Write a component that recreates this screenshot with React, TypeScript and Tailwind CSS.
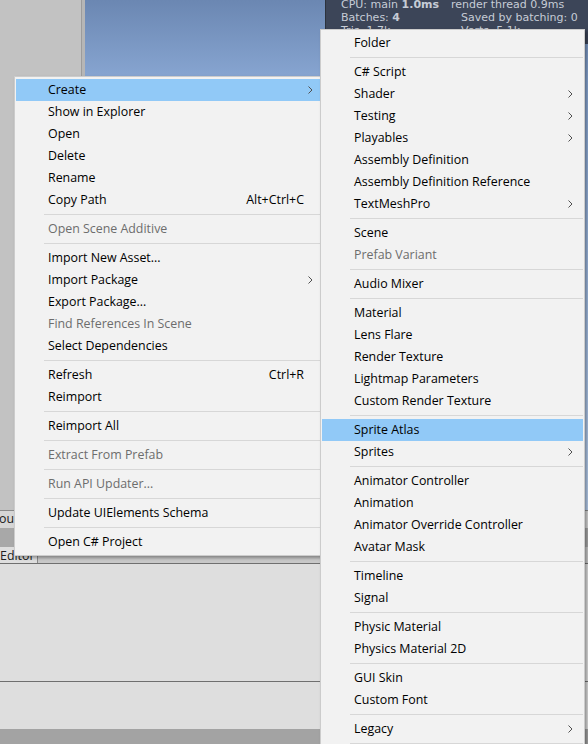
import React from "react";

type Entry =
  | { sep: true }
  | { label: string; disabled?: boolean; shortcut?: string; sub?: boolean; active?: boolean };

const S: Entry = { sep: true };

const projectMenu: Entry[] = [
  { label: "Create", sub: true, active: true },
  { label: "Show in Explorer" },
  { label: "Open" },
  { label: "Delete" },
  { label: "Rename" },
  { label: "Copy Path", shortcut: "Alt+Ctrl+C" },
  S,
  { label: "Open Scene Additive", disabled: true },
  S,
  { label: "Import New Asset..." },
  { label: "Import Package", sub: true },
  { label: "Export Package..." },
  { label: "Find References In Scene", disabled: true },
  { label: "Select Dependencies" },
  S,
  { label: "Refresh", shortcut: "Ctrl+R" },
  { label: "Reimport" },
  S,
  { label: "Reimport All" },
  S,
  { label: "Extract From Prefab", disabled: true },
  S,
  { label: "Run API Updater...", disabled: true },
  S,
  { label: "Update UIElements Schema" },
  S,
  { label: "Open C# Project" },
];

const createMenu: Entry[] = [
  { label: "Folder" },
  S,
  { label: "C# Script" },
  { label: "Shader", sub: true },
  { label: "Testing", sub: true },
  { label: "Playables", sub: true },
  { label: "Assembly Definition" },
  { label: "Assembly Definition Reference" },
  { label: "TextMeshPro", sub: true },
  S,
  { label: "Scene" },
  { label: "Prefab Variant", disabled: true },
  S,
  { label: "Audio Mixer" },
  S,
  { label: "Material" },
  { label: "Lens Flare" },
  { label: "Render Texture" },
  { label: "Lightmap Parameters" },
  { label: "Custom Render Texture" },
  S,
  { label: "Sprite Atlas", active: true },
  { label: "Sprites", sub: true },
  S,
  { label: "Animator Controller" },
  { label: "Animation" },
  { label: "Animator Override Controller" },
  { label: "Avatar Mask" },
  S,
  { label: "Timeline" },
  { label: "Signal" },
  S,
  { label: "Physic Material" },
  { label: "Physics Material 2D" },
  S,
  { label: "GUI Skin" },
  { label: "Custom Font" },
  S,
  { label: "Legacy", sub: true },
  S,
  { label: "UIElements", sub: true },
];

function Chevron() {
  return (
    <svg width="5" height="8" viewBox="0 0 5 8" className="block">
      <polyline points="0.5,0.5 4,4 0.5,7.5" fill="none" stroke="#505050" strokeWidth="1" />
    </svg>
  );
}

function Menu({ items, arrowRight, shortcutRight }: { items: Entry[]; arrowRight: string; shortcutRight: string }) {
  return (
    <div className="flex flex-col">
      {items.map((it, i) =>
        "sep" in it ? (
          <div key={i} className="flex h-[7px] items-center pl-[28px]">
            <div className="h-px w-full bg-[#d7d7d7]" />
          </div>
        ) : (
          <div
            key={i}
            className={`relative flex h-[22px] items-center whitespace-nowrap pl-[32px] ${
              it.active ? "bg-[#91c9f7]" : ""
            } ${it.disabled ? "text-[#6d6d6d]" : "text-black"}`}
          >
            <span>{it.label}</span>
            {it.shortcut && <span className={`ml-auto ${shortcutRight}`}>{it.shortcut}</span>}
            {it.sub && <span className={`absolute top-[7px] ${arrowRight}`}><Chevron /></span>}
          </div>
        )
      )}
    </div>
  );
}

export default function App() {
  return (
    <div className="relative flex h-[744px] w-[588px] flex-col overflow-hidden bg-[#a3a3a3] font-['Open_Sans','Noto_Sans_CJK_SC',sans-serif] text-[12.4px]">
      {/* editor background */}
      <div className="flex h-[510px]">
        <div className="w-[81px] bg-[#c2c2c2]" />
        <div className="w-[4px] border-l border-[#9c9c9c] bg-[#b6b6b6]" />
        <div className="relative flex-1 bg-[linear-gradient(180deg,#6b87b2_0px,#88a6d2_80px,#b6cdec_510px)]">
          <div className="absolute right-0 top-0 h-[44px] w-[263px] border-l border-[#2c323c] bg-[#3c4558] pl-[15px] font-['DejaVu_Sans',sans-serif] text-[11px] leading-[13px] text-[#c6ccd6]">
            <div className="-mt-[2px] flex">
              <span className="w-[110px]">
                CPU: main <b>1.0ms</b>
              </span>
              <span>render thread 0.9ms</span>
            </div>
            <div className="flex">
              <span className="w-[120px]">
                Batches: <b>4</b>
              </span>
              <span>Saved by batching: 0</span>
            </div>
            <div className="flex">
              <span className="w-[120px]">Tris: 1.7k</span>
              <span>Verts: 5.1k</span>
            </div>
          </div>
        </div>
      </div>
      <div className="flex h-[18px] items-center border-t border-[#8a8a8a] bg-[#d6d6d6] text-[#202020]">
        <span className="-ml-[1px]">ou</span>
      </div>
      <div className="h-[19px] bg-[#a8a8a8]" />
      <div className="flex h-[17px] border-b border-[#6f6f6f] bg-[#c8c8c8]">
        <div className="flex w-[38px] items-end border-r border-[#8a8a8a] bg-[#dedede] leading-[14px] text-[#202020]">
          Editor
        </div>
      </div>
      <div className="h-[118px] border-b border-[#6f6f6f] bg-[#dedede]" />
      <div className="h-[47px] bg-[#dedede]" />
      <div className="flex-1 bg-[#a3a3a3]" />

      {/* project context menu */}
      <div className="absolute left-[14px] top-[76px] w-[312px] border border-[#cccccc] bg-[#f2f2f2] px-[1px] py-[2px] shadow-[2px_2px_3px_rgba(0,0,0,0.35)]">
        <Menu items={projectMenu} arrowRight="right-[11px]" shortcutRight="pr-[20px]" />
      </div>

      {/* create submenu */}
      <div className="absolute left-[320px] top-[29px] w-[265px] border border-[#cccccc] bg-[#f2f2f2] px-[1px] py-[2px] shadow-[2px_2px_3px_rgba(0,0,0,0.35)]">
        <Menu items={createMenu} arrowRight="right-[10px]" shortcutRight="pr-[20px]" />
      </div>
    </div>
  );
}
